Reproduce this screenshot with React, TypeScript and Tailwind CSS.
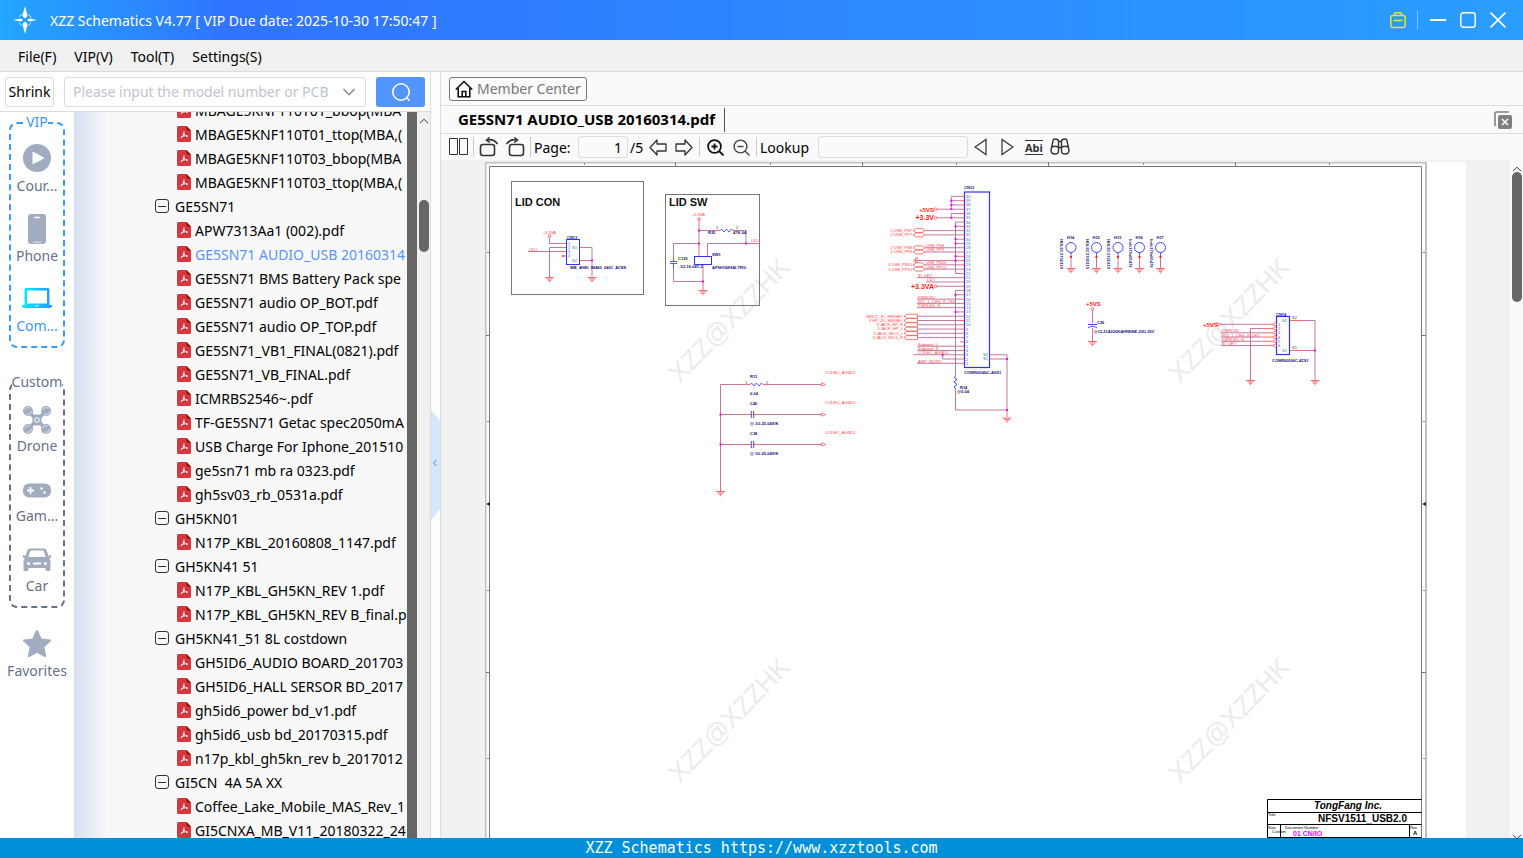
import React, { useState } from 'react';
import clsx from 'clsx';

//=========================================================================================================
//? Data
//=========================================================================================================

interface TreeRow {
  type: 'folder' | 'file';
  name: string;
}

const folder = (name: string): TreeRow => ({ type: 'folder', name });
const file = (name: string): TreeRow => ({ type: 'file', name });

const TREE: TreeRow[] = [
  file('MBAGE5KNF110T01_bbop(MBA'),
  file('MBAGE5KNF110T01_ttop(MBA,('),
  file('MBAGE5KNF110T03_bbop(MBA'),
  file('MBAGE5KNF110T03_ttop(MBA,('),
  folder('GE5SN71'),
  file('APW7313Aa1 (002).pdf'),
  file('GE5SN71 AUDIO_USB 20160314'),
  file('GE5SN71 BMS Battery Pack spe'),
  file('GE5SN71 audio OP_BOT.pdf'),
  file('GE5SN71 audio OP_TOP.pdf'),
  file('GE5SN71_VB1_FINAL(0821).pdf'),
  file('GE5SN71_VB_FINAL.pdf'),
  file('ICMRBS2546~.pdf'),
  file('TF-GE5SN71 Getac spec2050mA'),
  file('USB Charge For Iphone_201510'),
  file('ge5sn71 mb ra 0323.pdf'),
  file('gh5sv03_rb_0531a.pdf'),
  folder('GH5KN01'),
  file('N17P_KBL_20160808_1147.pdf'),
  folder('GH5KN41 51'),
  file('N17P_KBL_GH5KN_REV 1.pdf'),
  file('N17P_KBL_GH5KN_REV B_final.p'),
  folder('GH5KN41_51 8L costdown'),
  file('GH5ID6_AUDIO BOARD_201703'),
  file('GH5ID6_HALL SERSOR BD_2017'),
  file('gh5id6_power bd_v1.pdf'),
  file('gh5id6_usb bd_20170315.pdf'),
  file('n17p_kbl_gh5kn_rev b_2017012'),
  folder('GI5CN  4A 5A XX'),
  file('Coffee_Lake_Mobile_MAS_Rev_1'),
  file('GI5CNXA_MB_V11_20180322_24'),
];

//=========================================================================================================
//? Icons
//=========================================================================================================

const LogoIcon = () => (
  <svg width="26" height="30" viewBox="0 0 26 30" fill="#fff">
    <path d="M13 1 L15.6 11 L13 13.5 L10.4 11 Z" />
    <path d="M13 29 L15.6 19 L13 16.5 L10.4 19 Z" />
    <path d="M1 15 L9 13.6 L11 15 L9 16.4 Z" />
    <path d="M25 15 L17 13.6 L15 15 L17 16.4 Z" />
    <circle cx="13" cy="15" r="6.5" fill="none" stroke="#fff" strokeWidth="0.8" strokeDasharray="4 6.2" strokeDashoffset="-3" />
  </svg>
);

const PdfIcon = () => (
  <svg className="shrink-0" width="14" height="16" viewBox="0 0 14 16">
    <path d="M1.5 0 H9.5 L14 4.5 V14.5 A1.5 1.5 0 0 1 12.5 16 H1.5 A1.5 1.5 0 0 1 0 14.5 V1.5 A1.5 1.5 0 0 1 1.5 0 Z" fill="#d4383f" />
    <path d="M9.5 0 L14 4.5 H9.5 Z" fill="#8d1419" />
    <path d="M3.6 11.9 C5.8 10.6 7 8.5 7 5.4 M7 7.5 C7.8 9.4 9 10.1 10.8 10.2 M4.4 10.9 C6.2 9.8 8 9.6 10.4 10.1" fill="none" stroke="#fff" strokeWidth="1" strokeLinejoin="round" />
  </svg>
);

const CollapseIcon = () => (
  <svg className="shrink-0" width="14" height="14" viewBox="0 0 14 14" fill="none" stroke="#333">
    <rect x="0.5" y="0.5" width="13" height="13" rx="2.5" />
    <path d="M3 7.5 H11" />
  </svg>
);

const CourseIcon = () => (
  <svg width="30" height="30" viewBox="0 1 30 30">
    <circle cx="15" cy="15" r="14" fill="#a2acc0" />
    <path d="M10.5 9.5 Q10.5 8.5 11.5 9 L21.5 14.3 Q22.3 15 21.5 15.7 L11.5 21 Q10.5 21.5 10.5 20.5 Z" fill="#fff" />
  </svg>
);

const PhoneIcon = () => (
  <svg width="30" height="30" viewBox="0 0 30 30">
    <rect x="6" y="0" width="18" height="30" rx="3" fill="#a2acc0" />
    <rect x="12" y="2.8" width="6" height="1.5" rx="0.7" fill="#fff" />
    <path d="M11 28.2 H19" stroke="#fff" strokeWidth="0.8" />
  </svg>
);

const ComputerIcon = () => (
  <svg width="30" height="30" viewBox="0 1 30 30">
    <defs>
      <linearGradient id="laptop" x1="0" x2="1">
        <stop offset="0" stopColor="#00f0ff" />
        <stop offset="1" stopColor="#2b96ff" />
      </linearGradient>
    </defs>
    <path fillRule="evenodd" fill="url(#laptop)" d="M4 5 H26 Q27.5 5 27.5 6.5 V22 H30 V23 Q30 25 28 25 H2 Q0 25 0 23 V22 H2.5 V6.5 Q2.5 5 4 5 Z M5 7.5 V20.5 H25 V7.5 Z" />
    <path d="M13 22.8 H17" stroke="#fff" strokeWidth="0.8" />
  </svg>
);

const DroneIcon = () => (
  <svg width="30" height="30" viewBox="0 -1 30 30">
    <path d="M6 6 L24 24 M24 6 L6 24" stroke="#a2acc0" strokeWidth="3.6" />
    <rect x="10.5" y="9.5" width="9" height="11" rx="3" fill="#a2acc0" />
    {[[6, 6], [24, 6], [6, 24], [24, 24]].map(([x, y]) => (
      <g key={`${x}-${y}`}>
        <circle cx={x} cy={y} r="5" fill="#a2acc0" />
        <circle cx={x} cy={y} r="3.4" fill="none" stroke="#e4e8ef" strokeWidth="0.8" strokeDasharray="7 4" />
      </g>
    ))}
    <circle cx="15" cy="15" r="2.3" fill="none" stroke="#fff" />
  </svg>
);

const GameIcon = () => (
  <svg width="30" height="30" viewBox="0 -1 30 30">
    <rect x="1" y="8.5" width="28" height="14" rx="6" fill="#a2acc0" />
    <path d="M5 15.5 H12 M8.5 12 V19" stroke="#fff" strokeWidth="1.8" />
    <circle cx="19.5" cy="13.5" r="1.2" fill="#fff" />
    <circle cx="22.5" cy="17.5" r="1.2" fill="#fff" />
  </svg>
);

const CarIcon = () => (
  <svg width="30" height="30" viewBox="0 -1 30 30">
    <path
      fillRule="evenodd"
      fill="#a2acc0"
      d="M8 3.5 H22 Q24 3.5 24.6 5.3 L26.5 11 L29 9.7 V12.5 L27.2 13.6 Q28.5 15 28.5 17 V24.5 Q28.5 26 27 26 H25 Q23.5 26 23.5 24.5 V23 H6.5 V24.5 Q6.5 26 5 26 H3 Q1.5 26 1.5 24.5 V17 Q1.5 15 2.8 13.6 L1 12.5 V9.7 L3.5 11 L5.4 5.3 Q6 3.5 8 3.5 Z M8.5 5.5 L6.3 12 H23.7 L21.5 5.5 Z M5 18.5 A1.6 1.6 0 1 0 8.2 18.5 A1.6 1.6 0 1 0 5 18.5 Z M21.8 18.5 A1.6 1.6 0 1 0 25 18.5 A1.6 1.6 0 1 0 21.8 18.5 Z M11 17.5 V19.5 H19 V17.5 Z"
    />
  </svg>
);

const StarIcon = () => (
  <svg width="30" height="30" viewBox="0 0 30 30">
    <path d="M15 2 L18.9 10.4 L28 11.5 L21.3 17.8 L23.1 27 L15 22.6 L6.9 27 L8.7 17.8 L2 11.5 L11.1 10.4 Z" fill="#a2acc0" stroke="#a2acc0" strokeWidth="2" strokeLinejoin="round" />
  </svg>
);

const ChevronUp = () => (
  <svg width="10" height="6" viewBox="0 0 10 6" fill="none" stroke="#333">
    <path d="M1 5.2 L5 1.2 L9 5.2" />
  </svg>
);

const RotateIcon = ({ flip = false }: { flip?: boolean }) => (
  <svg className={clsx(flip && '-scale-x-100')} width="20" height="20" viewBox="0 0 20 20" fill="none" stroke="#333" strokeWidth="1.6">
    <rect x="1.5" y="7.5" width="14" height="11" rx="2.5" />
    <path d="M7.5 3.2 C12 1.8 15.5 3 18.5 7" />
    <path d="M10.5 0.3 L7.3 3.3 L11 5.4" strokeWidth="1.3" />
  </svg>
);

const BlockArrow = ({ flip = false }: { flip?: boolean }) => (
  <svg className={clsx(flip && '-scale-x-100')} width="18" height="18" viewBox="0 0 18 18" fill="none" stroke="#333" strokeWidth="1.3" strokeLinejoin="round">
    <path d="M1 9.5 L8 2 V6 H17 V13 H8 V17 Z" />
  </svg>
);

const ZoomIcon = ({ plus = false }: { plus?: boolean }) => (
  <svg width="18" height="18" viewBox="0 0 18 18" fill="none" stroke={plus ? '#111' : '#444'} strokeWidth={plus ? 1.8 : 1.4}>
    <circle cx="7.5" cy="8.5" r="6.4" />
    <path d="M12 13 L16.5 17.5" />
    <path d={plus ? 'M4.5 8.5 H10.5 M7.5 5.5 V11.5' : 'M4.5 8.5 H10.5'} />
  </svg>
);

const BinocularsIcon = () => (
  <svg width="20" height="18" viewBox="0 0 20 18" fill="none" stroke="#333" strokeWidth="1.4">
    <path d="M3 3 Q3 1 5 1 Q8.5 1 8.5 3.5 V13 Q8.5 16 5 16 Q1 16 1 12 Z" />
    <path d="M17 3 Q17 1 15 1 Q11.5 1 11.5 3.5 V13 Q11.5 16 15 16 Q19 16 19 12 Z" />
    <path d="M1.5 9.5 Q5 7 8.5 9.5 H11.5 Q15 7 18.5 9.5 M8.5 3.5 H11.5" />
  </svg>
);

//=========================================================================================================
//? Schematic parts
//=========================================================================================================

const WIRE = '#b0588a';
const RED = '#ff4545';
const BLUE = '#3030ff';
const NAVY = '#10107c';

const Wire = ({ d }: { d: string }) => <path d={d} fill="none" stroke={WIRE} strokeWidth="0.8" />;
const Stub = ({ d }: { d: string }) => <path d={d} fill="none" stroke={RED} strokeWidth="0.8" />;
const Dot = ({ x, y }: { x: number; y: number }) => <rect x={x - 1} y={y - 1} width="2" height="2" fill="#ff00ff" />;
const Ring = ({ x, y }: { x: number; y: number }) => <circle cx={x} cy={y} r="1.4" fill="#fff" stroke={RED} strokeWidth="0.7" />;

const Ground = ({ x, y }: { x: number; y: number }) => (
  <path d={`M${x - 4.5} ${y} H${x + 4.5} M${x - 3} ${y + 1.4} H${x + 3} M${x - 1.7} ${y + 2.8} H${x + 1.7} M${x - 0.6} ${y + 4.2} H${x + 0.6}`} stroke={RED} strokeWidth="0.8" />
);

interface LabelProps {
  x: number;
  y: number;
  children: string;
  fill?: string;
  size?: number;
  bold?: boolean;
  end?: boolean;
}

const Label = ({ x, y, children, fill = NAVY, size = 4, bold = false, end = false }: LabelProps) => (
  <text x={x} y={y} fontSize={size} fill={fill} fontWeight={bold ? 700 : 400} textAnchor={end ? 'end' : 'start'}>
    {children}
  </text>
);

const Watermark = ({ x, y }: { x: number; y: number }) => (
  <text x={x} y={y} transform={`rotate(-46 ${x} ${y})`} textAnchor="middle" dominantBaseline="central" fontSize="26" fill="#ebebed">
    XZZ@XZZHK
  </text>
);

//=========================================================================================================
// LID CON and LID SW blocks
const LidBlocks = () => (
  <g>
    <rect x="511.5" y="181.5" width="132" height="113" fill="none" stroke="#777" />
    <Label x={515} y={206} size={11} fill="#111" bold>LID CON</Label>
    <Label x={543} y={234} fill={RED}>+3.3VA</Label>
    <Ring x={549.5} y={236} />
    <Wire d="M549.5 237.5 V243.5 H560" />
    <Wire d="M549.5 277 V247.5 H560 M528 251.5 H560 M585 247.5 H592 V277 M585 260.5 H592" />
    <Stub d="M560 243.5 H566 M560 247.5 H566 M560 251.5 H566 M563 256 H566 M562 255 L564 257 M564 255 L562 257 M580 247.5 H585 M580 260.5 H585" />
    <Label x={529} y={251} fill={RED}>LID#</Label>
    <Label x={567} y={239} bold>CN13</Label>
    <rect x="566.5" y="239.5" width="13" height="25" fill="none" stroke={BLUE} strokeWidth="1" />
    {[1, 2, 3, 4].map((pin) => (
      <Label key={pin} x={568} y={241 + pin * 4} fill="#3a6a90">{String(pin)}</Label>
    ))}
    <Label x={572} y={249} fill="#3a6a90">S1</Label>
    <Label x={572} y={262} fill="#3a6a90">S2</Label>
    <Label x={570} y={269} bold>WB_4H80_88460_0401_ACES</Label>
    <Dot x={592} y={260.5} />
    <Ground x={549.5} y={277.5} />
    <Ground x={592} y={277.5} />

    <rect x="665.5" y="194.5" width="94" height="111" fill="none" stroke="#777" />
    <Label x={669} y={206} size={11} fill="#111" bold>LID SW</Label>
    <Label x={692} y={216} fill={RED}>+3.3VA</Label>
    <Ring x={699} y={219} />
    <Wire d="M699 220 V250 M699 230.5 H714 M738 230.5 H746 V243.5 M759 243.5 H707.5 V250 M699 243.5 H673.5 V258 M673.5 268 V281.5 H703 M703 272 V290" />
    <Stub d="M699 250 V256 M707.5 250 V256 M714 230.5 H720 M733 230.5 H738 M703 265 V272" />
    <path d="M720 230.5 L721.5 229 L724 232 L726.5 229 L729 232 L731.5 229 L733 230.5" fill="none" stroke={BLUE} strokeWidth="0.8" />
    <path d="M670 261.5 H677 M670 263.5 H677 M673.5 258 V261.5 M673.5 263.5 V268" stroke={BLUE} strokeWidth="0.8" />
    <rect x="694.5" y="256.5" width="17" height="8" fill="none" stroke={BLUE} />
    <Label x={716} y={229} fill="#444">1</Label>
    <Label x={736} y={229} fill="#444">2</Label>
    <Label x={708} y={234} bold>R35</Label>
    <Label x={733} y={234} bold>47K-04</Label>
    <Label x={751} y={242} fill={RED}>LID#</Label>
    <Label x={678} y={260} bold>C139</Label>
    <Label x={679} y={268} bold>.1U-16-04Y-Z</Label>
    <Label x={712} y={256} bold>SW1</Label>
    <Label x={712} y={269} bold>AP9H182HAI-TRG</Label>
    <Dot x={699} y={230.5} />
    <Dot x={699} y={243.5} />
    <Dot x={746} y={243.5} />
    <Dot x={703} y={281.5} />
    <Ground x={703} y={290.5} />
  </g>
);

//=========================================================================================================
// CODEC_AGND rows
const AgndBlock = () => (
  <g>
    <Wire d="M720.5 491 V384.5 H745 M768 384.5 H821 M720.5 414.5 H745 M758 414.5 H821 M720.5 444.5 H745 M758 444.5 H821" />
    <Stub d="M745 384.5 H750 M763 384.5 H768 M745 414.5 H751 M753 414.5 H758 M745 444.5 H751 M753 444.5 H758" />
    <path d="M750 384.5 L751.5 383 L754 386 L756.5 383 L759 386 L761.5 383 L763 384.5" fill="none" stroke={BLUE} strokeWidth="0.8" />
    <path d="M751.3 411 V418 M753.7 411 V418 M751.3 441 V448 M753.7 441 V448" stroke={BLUE} strokeWidth="0.9" />
    {[384.5, 414.5, 444.5].map((y) => (
      <g key={y}>
        <path d={`M821.5 ${y - 1.4} H823 L825.5 ${y} L823 ${y + 1.4} H821.5 Z`} fill="#fff" stroke={RED} strokeWidth="0.7" />
        <Label x={825} y={y - 11} fill={RED}>CODEC_AGND1</Label>
      </g>
    ))}
    <Label x={745} y={384} fill="#444">1</Label>
    <Label x={766} y={384} fill="#444">2</Label>
    <Label x={750} y={378} bold>R11</Label>
    <Label x={750} y={395} bold>0-04</Label>
    <Label x={750} y={405} bold>C40</Label>
    <Label x={750} y={425} bold>@.1U-25-04X/K</Label>
    <Label x={750} y={435} bold>C38</Label>
    <Label x={750} y={455} bold>@.1U-25-04X/K</Label>
    <Dot x={720.5} y={414.5} />
    <Dot x={720.5} y={444.5} />
    <Ground x={720.5} y={491.5} />
  </g>
);

//=========================================================================================================
// 40 pin connector
const pinY = (pin: number) => 363.3 - (pin - 1) * 4.28;

const HEX_NETS = [
  { pin: 32, text: '2  USB_PN7' },
  { pin: 31, text: '2  USB_PP7' },
  { pin: 28, text: '2  USB_PN8', net: 'USB_PN8' },
  { pin: 27, text: '2  USB_PP8', net: 'USB_PP8' },
  { pin: 24, text: '4  USB_PN10', net: 'USB_PN10' },
  { pin: 23, text: '4  USB_PP10', net: 'USB_PP10' },
];

const JACK_NETS = ['3  JACK_MIC1_R', '3  JACK_MIC1_L', '3  JACK_HP_L', '3  JACK_HP_R', '3  HP_JD_SENSE#', '3MIC1_JD_SENSE#'];

const PLAIN_NETS = [
  { pin: 21, x: 917, text: 'ID_DET' },
  { pin: 20, x: 926, text: 'LID#' },
  { pin: 16, x: 917, text: 'PWRON#' },
  { pin: 15, x: 917, text: 'RIO_1_CHG_R_LED' },
  { pin: 14, x: 917, text: 'PWRLED_N' },
  { pin: 5, x: 917, text: 'Subwoof_L' },
  { pin: 4, x: 917, text: 'Subwoof_R' },
  { pin: 3, x: 917, text: 'CODEC_AGND1' },
  { pin: 1, x: 917, text: 'AMP_MUTE#' },
];

const POWER_NETS = [
  { pin: 37, text: '+5VS', size: 6 },
  { pin: 35, text: '+3.3V', size: 7 },
  { pin: 19, text: '+3.3VA', size: 7 },
];

const Connector40 = () => (
  <g>
    <Label x={964} y={189} bold>CN12</Label>
    <rect x="964.5" y="192" width="25" height="175.5" fill="none" stroke={BLUE} strokeWidth="1.2" />
    {Array.from({ length: 40 }, (_, i) => i + 1).map((pin) => (
      <g key={pin}>
        <Stub d={`M960 ${pinY(pin)} H964`} />
        <Label x={966} y={pinY(pin) + 1.5} fill="#3a6a90">{String(pin)}</Label>
      </g>
    ))}

    <Wire d={`M960 ${pinY(40)} H951.3 V${pinY(37)} M951.3 ${pinY(39)} H960 M951.3 ${pinY(38)} H960 M960 ${pinY(36)} H951.3 V${pinY(35)}`} />
    <Wire d={`M960 ${pinY(34)} H955.5 V${pinY(22)} H960`} />
    {[33, 30, 29, 26].map((pin) => (
      <Wire key={pin} d={`M955.5 ${pinY(pin)} H960`} />
    ))}
    <Wire d={`M917 ${pinY(25)} H960`} />
    <Stub d={`M917 ${pinY(25) - 4} V${pinY(25) + 4} M915.6 ${pinY(25) - 2.6} V${pinY(25) + 2.6} M914.2 ${pinY(25) - 1.3} V${pinY(25) + 1.3}`} />
    <Wire d={`M960 ${pinY(18)} H955.5 V372 M955.5 ${pinY(17)} H960 M955.5 ${pinY(13)} H960 M955.5 392 V410 H1007`} />
    <Wire d={`M942.7 ${pinY(3)} V${pinY(2)} H960`} />
    {[39, 38, 37, 35].map((pin) => <Dot key={pin} x={951.3} y={pinY(pin)} />)}
    {[33, 30, 29, 26, 25, 17, 13].map((pin) => <Dot key={pin} x={955.5} y={pinY(pin)} />)}
    <Dot x={942.7} y={pinY(3)} />

    {POWER_NETS.map(({ pin, text, size }) => (
      <g key={pin}>
        <Wire d={`M937 ${pinY(pin)} H960`} />
        <Ring x={935.5} y={pinY(pin)} />
        <Label x={934} y={pinY(pin) + 2.3} size={size} fill="#ff1a1a" bold end>{text}</Label>
      </g>
    ))}

    {HEX_NETS.map(({ pin, text, net }) => (
      <g key={pin}>
        <Wire d={`M925 ${pinY(pin)} H960`} />
        <path d={`M913 ${pinY(pin)} L916 ${pinY(pin) - 2} H922 L925 ${pinY(pin)} L922 ${pinY(pin) + 2} H916 Z`} fill="#fff" stroke={RED} strokeWidth="0.7" />
        <Label x={912} y={pinY(pin) + 1.4} fill={RED} end>{text}</Label>
        {net && <Label x={926} y={pinY(pin) - 0.6} fill={RED}>{net}</Label>}
      </g>
    ))}

    {JACK_NETS.map((text, i) => (
      <g key={text}>
        <Wire d={`M917 ${pinY(i + 7)} H960`} />
        <path d={`M904 ${pinY(i + 7)} L907 ${pinY(i + 7) - 2} H917.5 V${pinY(i + 7) + 2} H907 Z`} fill="#fff" stroke={RED} strokeWidth="0.7" />
        <Label x={903} y={pinY(i + 7) + 1.4} fill={RED} end>{text}</Label>
      </g>
    ))}

    {PLAIN_NETS.map(({ pin, x, text }) => (
      <g key={pin}>
        <Wire d={`M${pin === 3 ? 913 : x} ${pinY(pin)} H960`} />
        <Label x={x + 1} y={pinY(pin) - 0.6} fill={RED}>{text}</Label>
      </g>
    ))}

    <Label x={983} y={355.5} fill="#3a6a90">S2</Label>
    <Label x={983} y={360} fill="#3a6a90">S1</Label>
    <Stub d={`M990 ${pinY(3)} H998 M990 ${pinY(2)} H998`} />
    <Wire d={`M998 ${pinY(3)} H1007 V417 M998 ${pinY(2)} H1007`} />
    <Dot x={1007} y={pinY(2)} />
    <Dot x={1007} y={410} />
    <Ground x={1007} y={418} />
    <Label x={964} y={373.5} bold>CONR00040C-A6S1</Label>
    <Stub d="M955.5 372 V376 M955.5 388 V392" />
    <path d="M955.5 376 L954 377.5 L957 379.5 L954 382 L957 384.5 L954 387 L955.5 388.5" fill="none" stroke={BLUE} strokeWidth="0.9" />
    <Label x={960} y={388.5} bold>R14</Label>
    <Label x={957} y={392.5} bold>@0-04</Label>
  </g>
);

//=========================================================================================================
// Mounting holes, C26 and the 6 pin connector
const HOLES = [
  { x: 1071, name: 'H14', part: 'HOLEC276D110' },
  { x: 1096.5, name: 'H12', part: 'HOLEC276D110' },
  { x: 1118, name: 'H13', part: 'HOLEC276D110' },
  { x: 1139.5, name: 'H16', part: 'hole276x60d79' },
  { x: 1160.5, name: 'H17', part: 'hole276x60d79' },
];

const SIX_NETS = ['', '', 'PWRON#', 'RIO_1_CHG_R_LED', 'PWRLED_N', 'ID_DET'];

const RightBlocks = () => (
  <g>
    {HOLES.map(({ x, name, part }) => (
      <g key={name}>
        <Label x={x - 4} y={239} bold>{name}</Label>
        <circle cx={x} cy="247.5" r="5" fill="none" stroke={BLUE} strokeWidth="0.9" />
        <path d={`M${x} 252.5 V257`} stroke={BLUE} strokeWidth="0.8" />
        <Wire d={`M${x} 258 V268`} />
        <rect x={x - 1} y="256" width="2" height="2" fill="#ff2020" />
        <Ground x={x} y={268.5} />
        <text transform={`translate(${x - 11} 239) rotate(90)`} fontSize="4" fontWeight="700" fill={NAVY}>{part}</text>
      </g>
    ))}

    <Label x={1086} y={306} size={6} fill="#ff1a1a" bold>+5VS</Label>
    <Ring x={1092.5} y={309} />
    <Wire d="M1092.5 310.5 V319 M1092.5 332 V341" />
    <Stub d="M1092.5 319 V323 M1092.5 328 V332" />
    <path d="M1088 324.5 H1097 M1088 328 Q1092.5 324.5 1097 328" fill="none" stroke={BLUE} strokeWidth="0.9" />
    <Label x={1097} y={324} bold>C26</Label>
    <Label x={1094} y={333} bold>@CL31A226KAHNNNE-22U-25V</Label>
    <Ground x={1092.5} y={341.5} />

    <Label x={1203} y={326.5} size={6} fill="#ff1a1a" bold>+5VS</Label>
    <Ring x={1218} y={324.3} />
    <Label x={1276} y={315.5} bold>CN14</Label>
    <rect x="1276.5" y="316.5" width="13" height="38" fill="none" stroke={BLUE} strokeWidth="1.2" />
    {SIX_NETS.map((net, i) => (
      <g key={i}>
        <Wire d={`M${i === 0 ? 1219.5 : i === 1 ? 1250.5 : 1221} ${324.3 + i * 4.25} H1264`} />
        <Stub d={`M1264 ${324.3 + i * 4.25} H1274`} />
        <Ring x={1275} y={324.3 + i * 4.25} />
        <Label x={1278} y={325.8 + i * 4.25} fill="#3a6a90">{String(i + 1)}</Label>
        {net && <Label x={1222} y={323.8 + i * 4.25} fill={RED}>{net}</Label>}
      </g>
    ))}
    <Wire d="M1250.5 328.5 V380 M1302 320.5 H1315 V380 M1302 350.5 H1315" />
    <Stub d="M1290 320.5 H1302 M1290 350.5 H1302" />
    <Dot x={1315} y={350.5} />
    <Label x={1282} y={322} fill="#3a6a90">S2</Label>
    <Label x={1282} y={352} fill="#3a6a90">S1</Label>
    <Label x={1292} y={319} fill="#444">S2</Label>
    <Label x={1292} y={349} fill="#444">S1</Label>
    <Label x={1272} y={362} bold>CONR00006C-4ZS1</Label>
    <Ground x={1250.5} y={380.5} />
    <Ground x={1315} y={380.5} />
  </g>
);

//=========================================================================================================
// Title block in the corner of the sheet
const TitleBlock = () => (
  <g fill="#000">
    <path d="M1421.5 799.5 H1267.5 V837.5 H1421.5 M1267.5 812.5 H1421.5 M1267.5 824.5 H1421.5 M1280.5 824.5 V837.5 M1409.5 824.5 V837.5" fill="none" stroke="#000" />
    <text x="1348" y="809" fontSize="10" fontWeight="700" fontStyle="italic" textAnchor="middle">TongFang Inc.</text>
    <Label x={1268} y={816} fill="#000">Title</Label>
    <Label x={1318} y={822} size={10} fill="#000" bold>NFSV1511_USB2.0</Label>
    <Label x={1268} y={829} fill="#000">Size</Label>
    <Label x={1272} y={833} fill="#000">Custom</Label>
    <Label x={1285} y={829} fill="#000">Document Number</Label>
    <Label x={1293} y={836} size={7} fill="#ff00ff" bold>01 CN/IO</Label>
    <Label x={1410} y={829} fill="#000">Rev</Label>
    <Label x={1413} y={835} size={6} fill="#000" bold>A</Label>
  </g>
);

const Schematic = () => (
  <svg className="block shrink-0 bg-white" width="981" height="676" viewBox="485 162 981 676" fontFamily="'Liberation Sans', Arial, sans-serif">
    <path d="M1426 838 V162.5 H485.5 V838" fill="none" stroke="#c0c0c0" strokeWidth="2" />
    <path d="M489.5 838 V166.5 H1421.5 V838" fill="none" stroke="#777" />
    <path d="M675.5 162 V166 M862.5 162 V166 M1048.5 162 V166 M1235.5 162 V166 M486 335.5 H490 M486 672.5 H490 M1422 335.5 H1426 M1422 672.5 H1426" stroke="#777" />
    <path d="M486 504 L490 502 V506 Z M1422 504 L1426 502 V506 Z" fill="#222" />
    {[584, 770, 956, 1143, 1329].map((x) => <rect key={x} x={x} y="163" width="1" height="2" fill="#888" />)}
    {[252, 421, 590, 758].map((y) => (
      <g key={y} fill="#888">
        <rect x="487" y={y} width="2" height="1" />
        <rect x="1423" y={y} width="2" height="1" />
      </g>
    ))}
    <Watermark x={729} y={320} />
    <Watermark x={1229} y={320} />
    <Watermark x={729} y={720} />
    <Watermark x={1229} y={720} />
    <LidBlocks />
    <AgndBlock />
    <Connector40 />
    <RightBlocks />
    <TitleBlock />
  </svg>
);

//=========================================================================================================
//? Header
//=========================================================================================================

const TitleBar = () => (
  <header className="flex h-10 shrink-0 items-center bg-linear-to-r from-[#22a6ff] via-[#3073ff] via-15% to-[#2a9eff] pl-3 pr-[17px] text-white">
    <LogoIcon />
    <h1 className="ml-3 flex-1 pt-px text-sm">XZZ Schematics V4.77 [ VIP Due date: 2025-10-30 17:50:47 ]</h1>
    <button type="button" aria-label="Toolbox">
      <svg width="18" height="18" viewBox="0 0 18 18" fill="none" stroke="#e6e23a" strokeWidth="1.5">
        <rect x="1.8" y="4.5" width="14.4" height="12" rx="2" />
        <path d="M5.5 4.5 V3 Q5.5 1.8 6.7 1.8 H11.3 Q12.5 1.8 12.5 3 V4.5 M4.5 9.5 H13.5" />
      </svg>
    </button>
    <span className="ml-2.5 mr-3 h-5 w-px bg-white/40" />
    <button type="button" aria-label="Minimize">
      <svg width="16" height="16" viewBox="0 0 16 16" stroke="#fff" strokeWidth="2"><path d="M0 8 H16" /></svg>
    </button>
    <button type="button" aria-label="Maximize" className="ml-3.5">
      <svg width="16" height="16" viewBox="0 0 16 16" fill="none" stroke="#fff" strokeWidth="1.4"><rect x="0.8" y="0.8" width="14.4" height="14.4" rx="2.5" /></svg>
    </button>
    <button type="button" aria-label="Close" className="ml-3.5">
      <svg width="16" height="16" viewBox="0 0 16 16" stroke="#fff" strokeWidth="1.6"><path d="M0.5 0.5 L15.5 15.5 M15.5 0.5 L0.5 15.5" /></svg>
    </button>
  </header>
);

const MenuBar = () => (
  <nav className="flex h-8 shrink-0 items-center gap-[18px] border-b border-[#dcdcdc] bg-[#f0f0f0] px-[18px] pt-0.5 text-sm">
    {['File(F)', 'VIP(V)', 'Tool(T)', 'Settings(S)'].map((item) => (
      <button key={item} type="button">{item}</button>
    ))}
  </nav>
);

//=========================================================================================================
//? Left side
//=========================================================================================================

const SearchRow = () => (
  <form className="flex h-10 shrink-0 items-center border-b border-[#dcdcdc] bg-white pl-[5px]" onSubmit={(event) => event.preventDefault()}>
    <button type="button" className="h-[30px] w-[49px] rounded-[3px] border border-[#dcdcdc] pt-px text-sm">Shrink</button>
    <label className="ml-2.5 flex h-[30px] flex-1 items-center rounded-[3px] border border-[#dcdcdc] pl-2 pr-2.5">
      <input
        type="text"
        aria-label="Model number or PCB"
        placeholder="Please input the model number or PCB"
        className="min-w-0 flex-1 pt-px text-sm outline-none placeholder:text-[#c0c4cc]"
      />
      <svg width="12" height="8" viewBox="0 0 12 8" fill="none" stroke="#888" strokeWidth="1.4"><path d="M0.5 1 L6 6.8 L11.5 1" /></svg>
    </label>
    <button type="submit" aria-label="Search" className="ml-2.5 mr-[5px] flex h-[30px] w-[49px] items-center justify-center rounded-[3px] bg-[#5394ff]">
      <svg width="20" height="20" viewBox="0 0 20 20" fill="none" stroke="#fff" strokeWidth="1.6">
        <circle cx="10" cy="10" r="8.2" />
        <path d="M15.5 15.5 L18.6 18.6" />
      </svg>
    </button>
  </form>
);

interface SideItemProps {
  icon: React.ReactNode;
  label: string;
  active?: boolean;
}

const SideItem = ({ icon, label, active = false }: SideItemProps) => (
  <button type="button" className={clsx('flex h-[70px] w-full flex-col items-center text-sm', active ? 'text-[#3a96ff]' : 'text-[#67718a]')}>
    {icon}
    <span className="whitespace-nowrap leading-6">{label}</span>
  </button>
);

const Sidebar = () => (
  <aside className="flex w-[74px] shrink-0 flex-col items-center bg-white text-sm">
    <fieldset className="relative mt-2.5 h-[226px] w-14 rounded-lg border-2 border-dashed border-[#3a9bff] pt-5">
      <legend className="absolute inset-x-0 -top-3 mx-auto w-max bg-white text-[#3a96ff] leading-5">VIP</legend>
      <SideItem icon={<CourseIcon />} label="Cour..." />
      <SideItem icon={<PhoneIcon />} label="Phone" />
      <SideItem icon={<ComputerIcon />} label="Com..." active />
    </fieldset>
    <fieldset className="relative mt-[34px] h-[226px] w-14 rounded-lg border-2 border-dashed border-[#67718a] pt-5">
      <legend className="absolute inset-x-0 -top-3 mx-auto w-max bg-white text-[#67718a] leading-5">Custom</legend>
      <SideItem icon={<DroneIcon />} label="Drone" />
      <SideItem icon={<GameIcon />} label="Gam..." />
      <SideItem icon={<CarIcon />} label="Car" />
    </fieldset>
    <div className="mt-[21px] w-full">
      <SideItem icon={<StarIcon />} label="Favorites" />
    </div>
  </aside>
);

const FileTree = () => {
  const [selected, setSelected] = useState('GE5SN71 AUDIO_USB 20160314');

  return (
    <div className="min-w-0 flex-1 overflow-hidden bg-linear-to-r from-[#d7e0f0] to-[#f8f8f8] to-10%">
      <ul className="-mt-3.5 text-sm">
        {TREE.map((row) => (
          <li key={row.name} className={clsx('flex h-6 items-center', row.type === 'folder' ? 'pl-[81px]' : 'pl-[103px]')}>
            {row.type === 'folder' ? <CollapseIcon /> : <PdfIcon />}
            <button
              type="button"
              onClick={() => setSelected(row.name)}
              className={clsx(
                'whitespace-pre pt-px',
                row.type === 'folder' ? 'ml-1.5' : 'ml-1',
                selected === row.name ? 'text-[#5a94ff]' : 'text-black'
              )}
            >
              {row.name}
            </button>
          </li>
        ))}
      </ul>
    </div>
  );
};

const LeftPanel = () => (
  <section className="flex w-[430px] shrink-0 flex-col">
    <SearchRow />
    <div className="flex min-h-0 flex-1">
      <Sidebar />
      <FileTree />
      <div className="w-2.5 shrink-0 bg-[#666]" />
      <div className="flex w-[13px] shrink-0 flex-col items-center bg-[#f0f0f0] pt-1.5">
        <ChevronUp />
        <div className="mt-[76px] h-[52px] w-2.5 rounded-full bg-[#666]" />
      </div>
    </div>
  </section>
);

const Splitter = () => (
  <div className="flex w-[11px] shrink-0 items-center border-x border-[#dcdcdc] bg-[#fafffa] pt-5">
    <button type="button" aria-label="Collapse panel" className="w-full">
      <svg width="9" height="110" viewBox="0 0 9 110">
        <path d="M0 0 L9 11 V99 L0 110 Z" fill="#d3e8ff" />
        <path d="M5.5 50 L2.5 53 L5.5 56" fill="none" stroke="#3a8ee6" />
      </svg>
    </button>
  </div>
);

//=========================================================================================================
//? Viewer
//=========================================================================================================

const Separator = ({ className }: { className?: string }) => <span className={clsx('h-5 w-px bg-[#ccc]', className)} />;

const Toolbar = () => {
  const [page, setPage] = useState('1');
  const [lookup, setLookup] = useState('');

  return (
    <div className="flex h-[26px] shrink-0 items-center bg-[#fafafa] pl-2 text-sm">
      <button type="button" aria-label="Two pages">
        <svg width="19" height="18" viewBox="0 0 19 18" fill="none" stroke="#333"><path d="M0.5 0.5 H8.5 V16.5 H0.5 Z M10.5 0.5 H18.5 V16.5 H10.5 Z" /></svg>
      </button>
      <Separator className="ml-[5px]" />
      <button type="button" aria-label="Rotate left" className="ml-[5px]"><RotateIcon /></button>
      <button type="button" aria-label="Rotate right" className="ml-1.5"><RotateIcon flip /></button>
      <Separator className="ml-[5px]" />
      <label htmlFor="page" className="ml-[3px] w-11 pt-px">Page:</label>
      <input
        id="page"
        type="text"
        value={page}
        onChange={(event) => setPage(event.target.value)}
        className="h-[22px] w-[50px] rounded-[3px] border border-[#dcdcdc] pr-[5px] pt-px text-right outline-none"
      />
      <span className="ml-0.5 w-4 pt-px">/5</span>
      <button type="button" aria-label="Previous page" className="ml-[3px]"><BlockArrow /></button>
      <button type="button" aria-label="Next page" className="ml-2"><BlockArrow flip /></button>
      <Separator className="ml-1.5" />
      <button type="button" aria-label="Zoom in" className="ml-[7px]"><ZoomIcon plus /></button>
      <button type="button" aria-label="Zoom out" className="ml-2"><ZoomIcon /></button>
      <Separator className="ml-[5px]" />
      <label htmlFor="lookup" className="ml-[3px] w-[58px] pt-px">Lookup</label>
      <input
        id="lookup"
        type="text"
        value={lookup}
        onChange={(event) => setLookup(event.target.value)}
        className="h-[22px] w-[150px] rounded-[3px] border border-[#dcdcdc] px-1 outline-none"
      />
      <button type="button" aria-label="Find previous" className="ml-1.5">
        <svg width="13" height="18" viewBox="0 0 13 18" fill="none" stroke="#333" strokeWidth="1.2"><path d="M12 1.5 V16.5 L1 9 Z" /></svg>
      </button>
      <button type="button" aria-label="Find next" className="ml-3.5">
        <svg width="13" height="18" viewBox="0 0 13 18" fill="none" stroke="#333" strokeWidth="1.2"><path d="M1 1.5 V16.5 L12 9 Z" /></svg>
      </button>
      <button type="button" className="ml-[11px] border-y border-[#333] text-[11px] font-bold leading-[13px] text-[#333]">Abi</button>
      <button type="button" aria-label="Search document" className="ml-[7px]"><BinocularsIcon /></button>
    </div>
  );
};

const Viewer = () => (
  <main className="flex min-w-0 flex-1 flex-col">
    <div className="flex h-[34px] shrink-0 items-center border-b border-[#dcdcdc] bg-[#fafafa] pl-2 text-sm">
      <button type="button" className="flex h-6 items-center gap-1 rounded-[3px] border border-[#777] px-[5px] text-[#777]">
        <svg width="18" height="18" viewBox="0 0 18 18" fill="none" stroke="#111" strokeWidth="1.6">
          <path d="M0.8 9.5 L9 1.5 L17.2 9.5 M3.2 8 V16.8 H14.8 V8 M7.2 16.5 V11.5 H10.8 V16.5" />
        </svg>
        Member Center
      </button>
    </div>

    <div className="flex h-7 shrink-0 items-center border-b border-[#dcdcdc] bg-[#fafafa] pr-[11px] text-sm">
      <button type="button" className="h-6 border-r border-[#555] pl-[17px] pr-[9px] text-[15px] font-bold">GE5SN71 AUDIO_USB 20160314.pdf</button>
      <button type="button" aria-label="Close all tabs" className="ml-auto">
        <svg width="18" height="18" viewBox="0 0 18 18">
          <path d="M1 15 V2.5 Q1 1 2.5 1 H15" fill="none" stroke="#808080" strokeWidth="1.6" />
          <rect x="4" y="4" width="14" height="14" rx="2" fill="#808080" />
          <path d="M8 8 L14 14 M14 8 L8 14" stroke="#fff" strokeWidth="1.5" />
        </svg>
      </button>
    </div>

    <Toolbar />

    <div className="flex min-h-0 flex-1 bg-[#f1f1f1]">
      <div className="flex min-w-0 flex-1 items-start justify-center overflow-hidden pt-0.5">
        <Schematic />
      </div>
      <div className="flex w-[13px] shrink-0 flex-col items-center bg-[#fafafa] pt-1.5">
        <ChevronUp />
        <div className="h-[130px] w-2.5 rounded-full bg-[#666]" />
        <div className="-mb-0.5 mt-auto rotate-180"><ChevronUp /></div>
      </div>
    </div>
  </main>
);

//=========================================================================================================
//? App
//=========================================================================================================

const App: React.FC = () => {
  return (
    <div className="flex h-screen flex-col overflow-hidden font-['Noto_Sans',sans-serif] text-black">
      <TitleBar />
      <MenuBar />
      <div className="flex min-h-0 flex-1">
        <LeftPanel />
        <Splitter />
        <Viewer />
      </div>
      <footer className="flex h-5 shrink-0 items-center justify-center bg-[#0090da] font-['DejaVu_Sans_Mono',monospace] text-[15px] text-white">
        XZZ Schematics https://www.xzztools.com
      </footer>
    </div>
  );
};

export default App;
